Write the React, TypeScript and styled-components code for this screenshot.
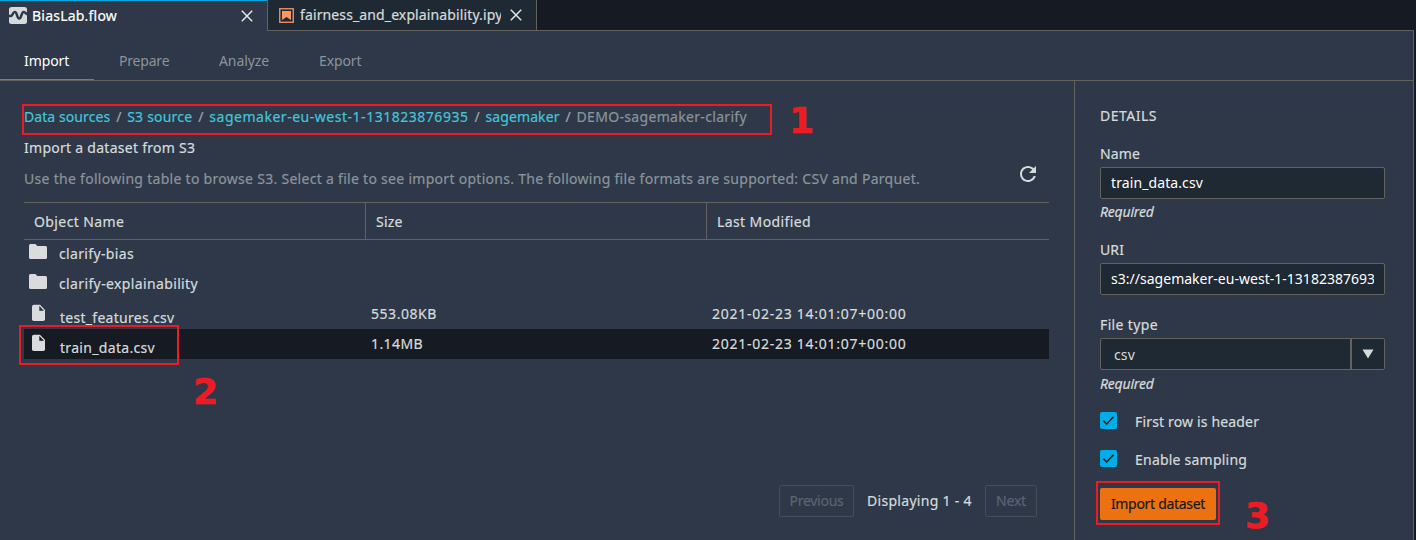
import React from "react";
import styled, { createGlobalStyle, css } from "styled-components";

const c = {
  chrome: "#161a22",
  panel: "#2e3848",
  field: "#1f2933",
  line: "#63625f",
  text: "#d5dbdb",
  muted: "#8b949b",
  link: "#44c5da",
  blue: "#00a8e1",
  orange: "#ec7211",
  red: "#ed1c24",
};

const GlobalStyle = createGlobalStyle`
  * { box-sizing: border-box; }
  body {
    margin: 0;
    background: ${c.chrome};
    color: ${c.text};
    font: 14px/20px "Noto Sans", sans-serif;
    -webkit-text-stroke: 0.2px;
    overflow: hidden;
  }
`;

const track = css<{ $track?: number }>`
  letter-spacing: ${(p) => p.$track ?? 0.3}px;
  white-space: nowrap;
`;

const Window = styled.div`
  position: relative;
  display: flex;
  flex-direction: column;
  width: 1416px;
  height: 540px;
`;

const FileTabs = styled.div`
  display: flex;
  height: 31px;
  width: 1414px;
`;

const FileTab = styled.div<{ $active?: boolean }>`
  display: flex;
  align-items: center;
  flex: none;
  width: ${(p) => (p.$active ? 267 : 270)}px;
  padding: ${(p) => (p.$active ? "0 14px 1px 9px" : "0 14px 0 11px")};
  background: ${(p) => (p.$active ? c.panel : c.field)};
  color: ${(p) => (p.$active ? "#ffffff" : c.text)};
  border: 0 solid ${c.line};
  ${(p) =>
    p.$active
      ? `border-top: 1px solid ${c.blue};`
      : "border-width: 0 1px 1px 1px;"}
`;

const FileName = styled.span<{ $track?: number }>`
  ${track}
  flex: 1;
  margin: 0 9px 0 5px;
  overflow: hidden;
`;

const NotebookName = styled(FileName)`
  margin-left: 6px;
`;

const TabsRest = styled.div`
  flex: 1;
  border-bottom: 1px solid ${c.line};
`;

const Frame = styled.div`
  display: flex;
  flex-direction: column;
  flex: 1;
  width: 1414px;
  background: ${c.panel};
  border-right: 1px solid ${c.line};
`;

const Steps = styled.nav`
  display: flex;
  height: 50px;
  border-bottom: 1px solid ${c.line};
  -webkit-text-stroke: 0;
`;

const Step = styled.a<{ $active?: boolean; $width: number; $track?: number }>`
  ${track}
  width: ${(p) => p.$width}px;
  height: 49px;
  padding: 20px 0 0 ${(p) => (p.$active ? 24 : 25)}px;
  color: ${(p) => (p.$active ? "#ffffff" : c.muted)};
  border-bottom: ${(p) => (p.$active ? `1px solid ${c.blue}` : "none")};
`;

const Body = styled.div`
  display: flex;
  flex: 1;
`;

const Browser = styled.main`
  display: flex;
  flex: none;
  flex-direction: column;
  width: 1074px;
  padding: 26px 25px 23px 24px;
`;

const Crumbs = styled.div`
  display: flex;
  height: 20px;
`;

const Crumb = styled.a<{ $track?: number; $current?: boolean }>`
  ${track}
  color: ${(p) => (p.$current ? c.muted : c.link)};
`;

const Slash = styled.span`
  width: 17px;
  text-align: center;
  color: #a0a6ab;
`;

const Heading = styled.div<{ $track?: number }>`
  ${track}
  margin-top: 11px;
`;

const Intro = styled.div`
  display: flex;
  justify-content: space-between;
  align-items: flex-start;
  margin-top: 8px;
  height: 36px;
  padding-right: 13px;
`;

const Description = styled.p<{ $track?: number }>`
  ${track}
  margin: 3px 0 0;
  color: ${c.muted};
`;

const HeaderRow = styled.div`
  display: grid;
  grid-template-columns: 341px 341px 1fr;
  height: 38px;
  border: solid ${c.line};
  border-width: 1px 0;
`;

const HeaderCell = styled.div<{ $track?: number }>`
  ${track}
  padding: 9px 0 0 10px;
  & + & {
    border-left: 1px solid ${c.line};
  }
`;

const Rows = styled.div`
  margin-top: -1px;
`;

const Row = styled.div<{ $selected?: boolean }>`
  display: grid;
  grid-template-columns: 347px 341px 1fr;
  height: 30px;
  padding-top: 5px;
  background: ${(p) => (p.$selected ? c.chrome : "transparent")};
`;

const ObjectCell = styled.div<{ $file?: boolean }>`
  display: flex;
  align-items: flex-start;
  padding-left: ${(p) => (p.$file ? 8 : 5)}px;
  gap: ${(p) => (p.$file ? 15 : 12)}px;
`;

const ObjectName = styled.span<{ $track?: number; $file?: boolean }>`
  ${track}
  margin-top: ${(p) => (p.$file ? 4 : 0)}px;
`;

const Cell = styled.span<{ $track?: number }>`
  ${track}
`;

const Pager = styled.div`
  display: flex;
  align-items: center;
  justify-content: flex-end;
  gap: 13px;
  margin-top: auto;
  padding-right: 12px;
`;

const PageButton = styled.button<{ $width: number; $track?: number }>`
  ${track}
  width: ${(p) => p.$width}px;
  height: 32px;
  padding: 0;
  font: inherit;
  color: #5c6570;
  background: transparent;
  border: 1px solid #454d57;
  border-radius: 2px;
`;

const PageInfo = styled.span<{ $track?: number }>`
  ${track}
  width: 105px;
`;

const Details = styled.aside`
  flex: 1;
  min-width: 0;
  padding: 25px 28px 0 25px;
  border-left: 1px solid ${c.line};
`;

const DetailsTitle = styled.div<{ $track?: number }>`
  ${track}
`;

const Label = styled.div<{ $gap: number; $track?: number }>`
  ${track}
  margin-top: ${(p) => p.$gap}px;
`;

const Field = styled.div<{ $track?: number }>`
  ${track}
  display: flex;
  height: 32px;
  margin-top: 3px;
  padding: 5px 10px 0;
  color: #ffffff;
  background: ${c.field};
  border: 1px solid ${c.line};
  border-radius: 2px;
  -webkit-text-stroke: 0;
`;

const FieldText = styled.span`
  flex: 1;
  overflow: hidden;
`;

const SelectField = styled(Field)`
  padding: 0;
  color: ${c.text};
`;

const SelectValue = styled.span`
  flex: 1;
  padding: 6px 0 0 13px;
`;

const SelectArrow = styled.span`
  display: flex;
  align-items: center;
  justify-content: center;
  width: 34px;
  border-left: 2px solid ${c.line};
`;

const Hint = styled.div<{ $gap: number; $track?: number }>`
  ${track}
  margin-top: ${(p) => p.$gap}px;
  font-style: italic;
`;

const CheckRow = styled.label<{ $track?: number }>`
  ${track}
  display: flex;
  gap: 18px;
  margin-top: 18px;
`;

const Check = styled.span`
  display: flex;
  width: 17px;
  height: 17px;
  background: #00ade8;
  border-radius: 2px;
`;

const ImportButton = styled.button<{ $track?: number }>`
  ${track}
  display: block;
  width: 116px;
  height: 32px;
  margin-top: 18px;
  padding: 0;
  font: inherit;
  color: #16191f;
  background: ${c.orange};
  border: 0;
  border-radius: 2px;
`;

const Callout = styled.div<{ $x: number; $y: number; $w: number; $h: number }>`
  position: absolute;
  left: ${(p) => p.$x}px;
  top: ${(p) => p.$y}px;
  width: ${(p) => p.$w}px;
  height: ${(p) => p.$h}px;
  border: 2px solid ${c.red};
`;

const CalloutNumber = styled.div<{ $x: number; $y: number }>`
  position: absolute;
  left: ${(p) => p.$x}px;
  top: ${(p) => p.$y}px;
  color: ${c.red};
  font: bold 36px/37px "DejaVu Sans", sans-serif;
  -webkit-text-stroke: 0.6px;
`;

const FlowIcon = () => (
  <svg width="18" height="17" viewBox="0 0 18 17">
    <rect width="18" height="17" rx="2.5" fill="#d5dbdb" />
    <path
      d="M0 9H1.800C3.600 9 3.800 5 5.800 5 8.400 5 7.800 11.600 10.200 11.600 12.800 11.600 12 5 14.800 5 16.500 5 16.500 6.800 18 7.200"
      fill="none"
      stroke={c.panel}
      strokeWidth="2.5"
    />
  </svg>
);

const NotebookIcon = () => (
  <svg width="15" height="15" viewBox="0 0 15 15">
    <rect x=".75" y=".75" width="13.5" height="13.5" fill="none" stroke="#f79763" strokeWidth="1.3" />
    <path d="M3 3h9v9L7.500 9 3 12z" fill="#f79763" />
  </svg>
);

const CloseIcon = () => (
  <svg width="12" height="12" viewBox="0 0 12 12">
    <path d="M.8.8l10.400 10.400M11.200.8L.8 11.200" stroke="#e3e6e6" strokeWidth="1.5" />
  </svg>
);

const RefreshIcon = () => (
  <svg width="16" height="16" viewBox="4 4 16 16">
    <path
      fill={c.text}
      d="M17.65 6.35C16.2 4.9 14.21 4 12 4c-4.42 0-7.99 3.58-7.99 8s3.57 8 7.99 8c3.73 0 6.84-2.55 7.73-6h-2.08c-.82 2.33-3.04 4-5.65 4-3.31 0-6-2.69-6-6s2.69-6 6-6c1.66 0 3.14.69 4.22 1.78L13 11h7V4l-2.35 2.35z"
    />
  </svg>
);

const FolderIcon = () => (
  <svg width="18" height="15" viewBox="0 0 18 15">
    <path d="M1.500 0H6.500L8.300 2H16.500Q18 2 18 3.500V13.500Q18 15 16.500 15H1.500Q0 15 0 13.500V1.500Q0 0 1.500 0z" fill="#d9dbdc" />
  </svg>
);

const FileIcon = ({ fold }: { fold: string }) => (
  <svg width="13" height="17" viewBox="0 0 13 17">
    <path d="M2 .8H8L13 6V15.200Q13 17 11.200 17H1.800Q0 17 0 15.200V2.500Q0 .8 2 .8z" fill="#d9dbdc" />
    <path d="M7.600 2.500V6.500H11.400z" fill={fold} stroke={fold} strokeWidth=".6" />
  </svg>
);

const CheckIcon = () => (
  <svg width="17" height="17" viewBox="0 0 17 17">
    <path d="M3.500 8.800L6.700 12 13.500 4.800" fill="none" stroke="#16191f" strokeWidth="1.500" />
  </svg>
);

const objects = [
  { name: "clarify-bias", track: 0.35 },
  { name: "clarify-explainability", track: 0.37 },
  { name: "test_features.csv", track: 0.28, file: true, size: "553.08KB", sizeTrack: 0.55 },
  { name: "train_data.csv", track: 0.32, file: true, size: "1.14MB", sizeTrack: 0.4, selected: true },
];

export default function App() {
  return (
    <Window>
      <GlobalStyle />
      <FileTabs>
        <FileTab $active>
          <FlowIcon />
          <FileName $track={0.22}>BiasLab.flow</FileName>
          <CloseIcon />
        </FileTab>
        <FileTab>
          <NotebookIcon />
          <NotebookName $track={0.12}>fairness_and_explainability.ipynb</NotebookName>
          <CloseIcon />
        </FileTab>
        <TabsRest />
      </FileTabs>
      <Frame>
        <Steps>
          <Step $active $width={94} $track={-0.1}>Import</Step>
          <Step $width={100} $track={-0.2}>Prepare</Step>
          <Step $width={100} $track={-0.1}>Analyze</Step>
          <Step $width={100} $track={-0.1}>Export</Step>
        </Steps>
        <Body>
          <Browser>
            <Crumbs>
              <Crumb $track={0.08}>Data sources</Crumb>
              <Slash>/</Slash>
              <Crumb $track={0.2}>S3 source</Crumb>
              <Slash>/</Slash>
              <Crumb $track={0.52}>sagemaker-eu-west-1-131823876935</Crumb>
              <Slash>/</Slash>
              <Crumb $track={0.1}>sagemaker</Crumb>
              <Slash>/</Slash>
              <Crumb $current $track={0.32}>DEMO-sagemaker-clarify</Crumb>
            </Crumbs>
            <Heading $track={0.27}>Import a dataset from S3</Heading>
            <Intro>
              <Description $track={0.29}>
                Use the following table to browse S3. Select a file to see import options. The following file
                formats are supported: CSV and Parquet.
              </Description>
              <RefreshIcon />
            </Intro>
            <HeaderRow>
              <HeaderCell $track={0.4}>Object Name</HeaderCell>
              <HeaderCell $track={0.2}>Size</HeaderCell>
              <HeaderCell $track={0.4}>Last Modified</HeaderCell>
            </HeaderRow>
            <Rows>
              {objects.map((o) => (
                <Row key={o.name} $selected={o.selected}>
                  <ObjectCell $file={o.file}>
                    {o.file ? <FileIcon fold={o.selected ? c.chrome : c.panel} /> : <FolderIcon />}
                    <ObjectName $file={o.file} $track={o.track}>{o.name}</ObjectName>
                  </ObjectCell>
                  <Cell $track={o.sizeTrack}>{o.size}</Cell>
                  <Cell $track={0.74}>{o.file && "2021-02-23 14:01:07+00:00"}</Cell>
                </Row>
              ))}
            </Rows>
            <Pager>
              <PageButton $width={75} $track={-0.25}>Previous</PageButton>
              <PageInfo $track={0.3}>Displaying 1 - 4</PageInfo>
              <PageButton $width={52} $track={-0.2}>Next</PageButton>
            </Pager>
          </Browser>
          <Details>
            <DetailsTitle $track={0.5}>DETAILS</DetailsTitle>
            <Label $gap={18} $track={0.1}>Name</Label>
            <Field $track={0.1}>
              <FieldText>train_data.csv</FieldText>
            </Field>
            <Hint $gap={3} $track={-0.2}>Required</Hint>
            <Label $gap={18} $track={0.1}>URI</Label>
            <Field $track={0.02}>
              <FieldText>s3://sagemaker-eu-west-1-131823876935</FieldText>
            </Field>
            <Label $gap={20} $track={0.36}>File type</Label>
            <SelectField $track={0.1}>
              <SelectValue>csv</SelectValue>
              <SelectArrow>
                <svg width="12" height="10" viewBox="0 0 12 10">
                  <path d="M.5.5h11L6 9.500z" fill={c.text} />
                </svg>
              </SelectArrow>
            </SelectField>
            <Hint $gap={4} $track={-0.2}>Required</Hint>
            <CheckRow $track={0.16}>
              <Check><CheckIcon /></Check>
              First row is header
            </CheckRow>
            <CheckRow $track={0.22}>
              <Check><CheckIcon /></Check>
              Enable sampling
            </CheckRow>
            <ImportButton $track={-0.3}>Import dataset</ImportButton>
          </Details>
        </Body>
      </Frame>
      <Callout $x={22} $y={104} $w={750} $h={31} />
      <CalloutNumber $x={789} $y={102}>1</CalloutNumber>
      <Callout $x={19} $y={325} $w={160} $h={40} />
      <CalloutNumber $x={193} $y={373}>2</CalloutNumber>
      <Callout $x={1096} $y={481} $w={124} $h={44} />
      <CalloutNumber $x={1245} $y={497}>3</CalloutNumber>
    </Window>
  );
}
